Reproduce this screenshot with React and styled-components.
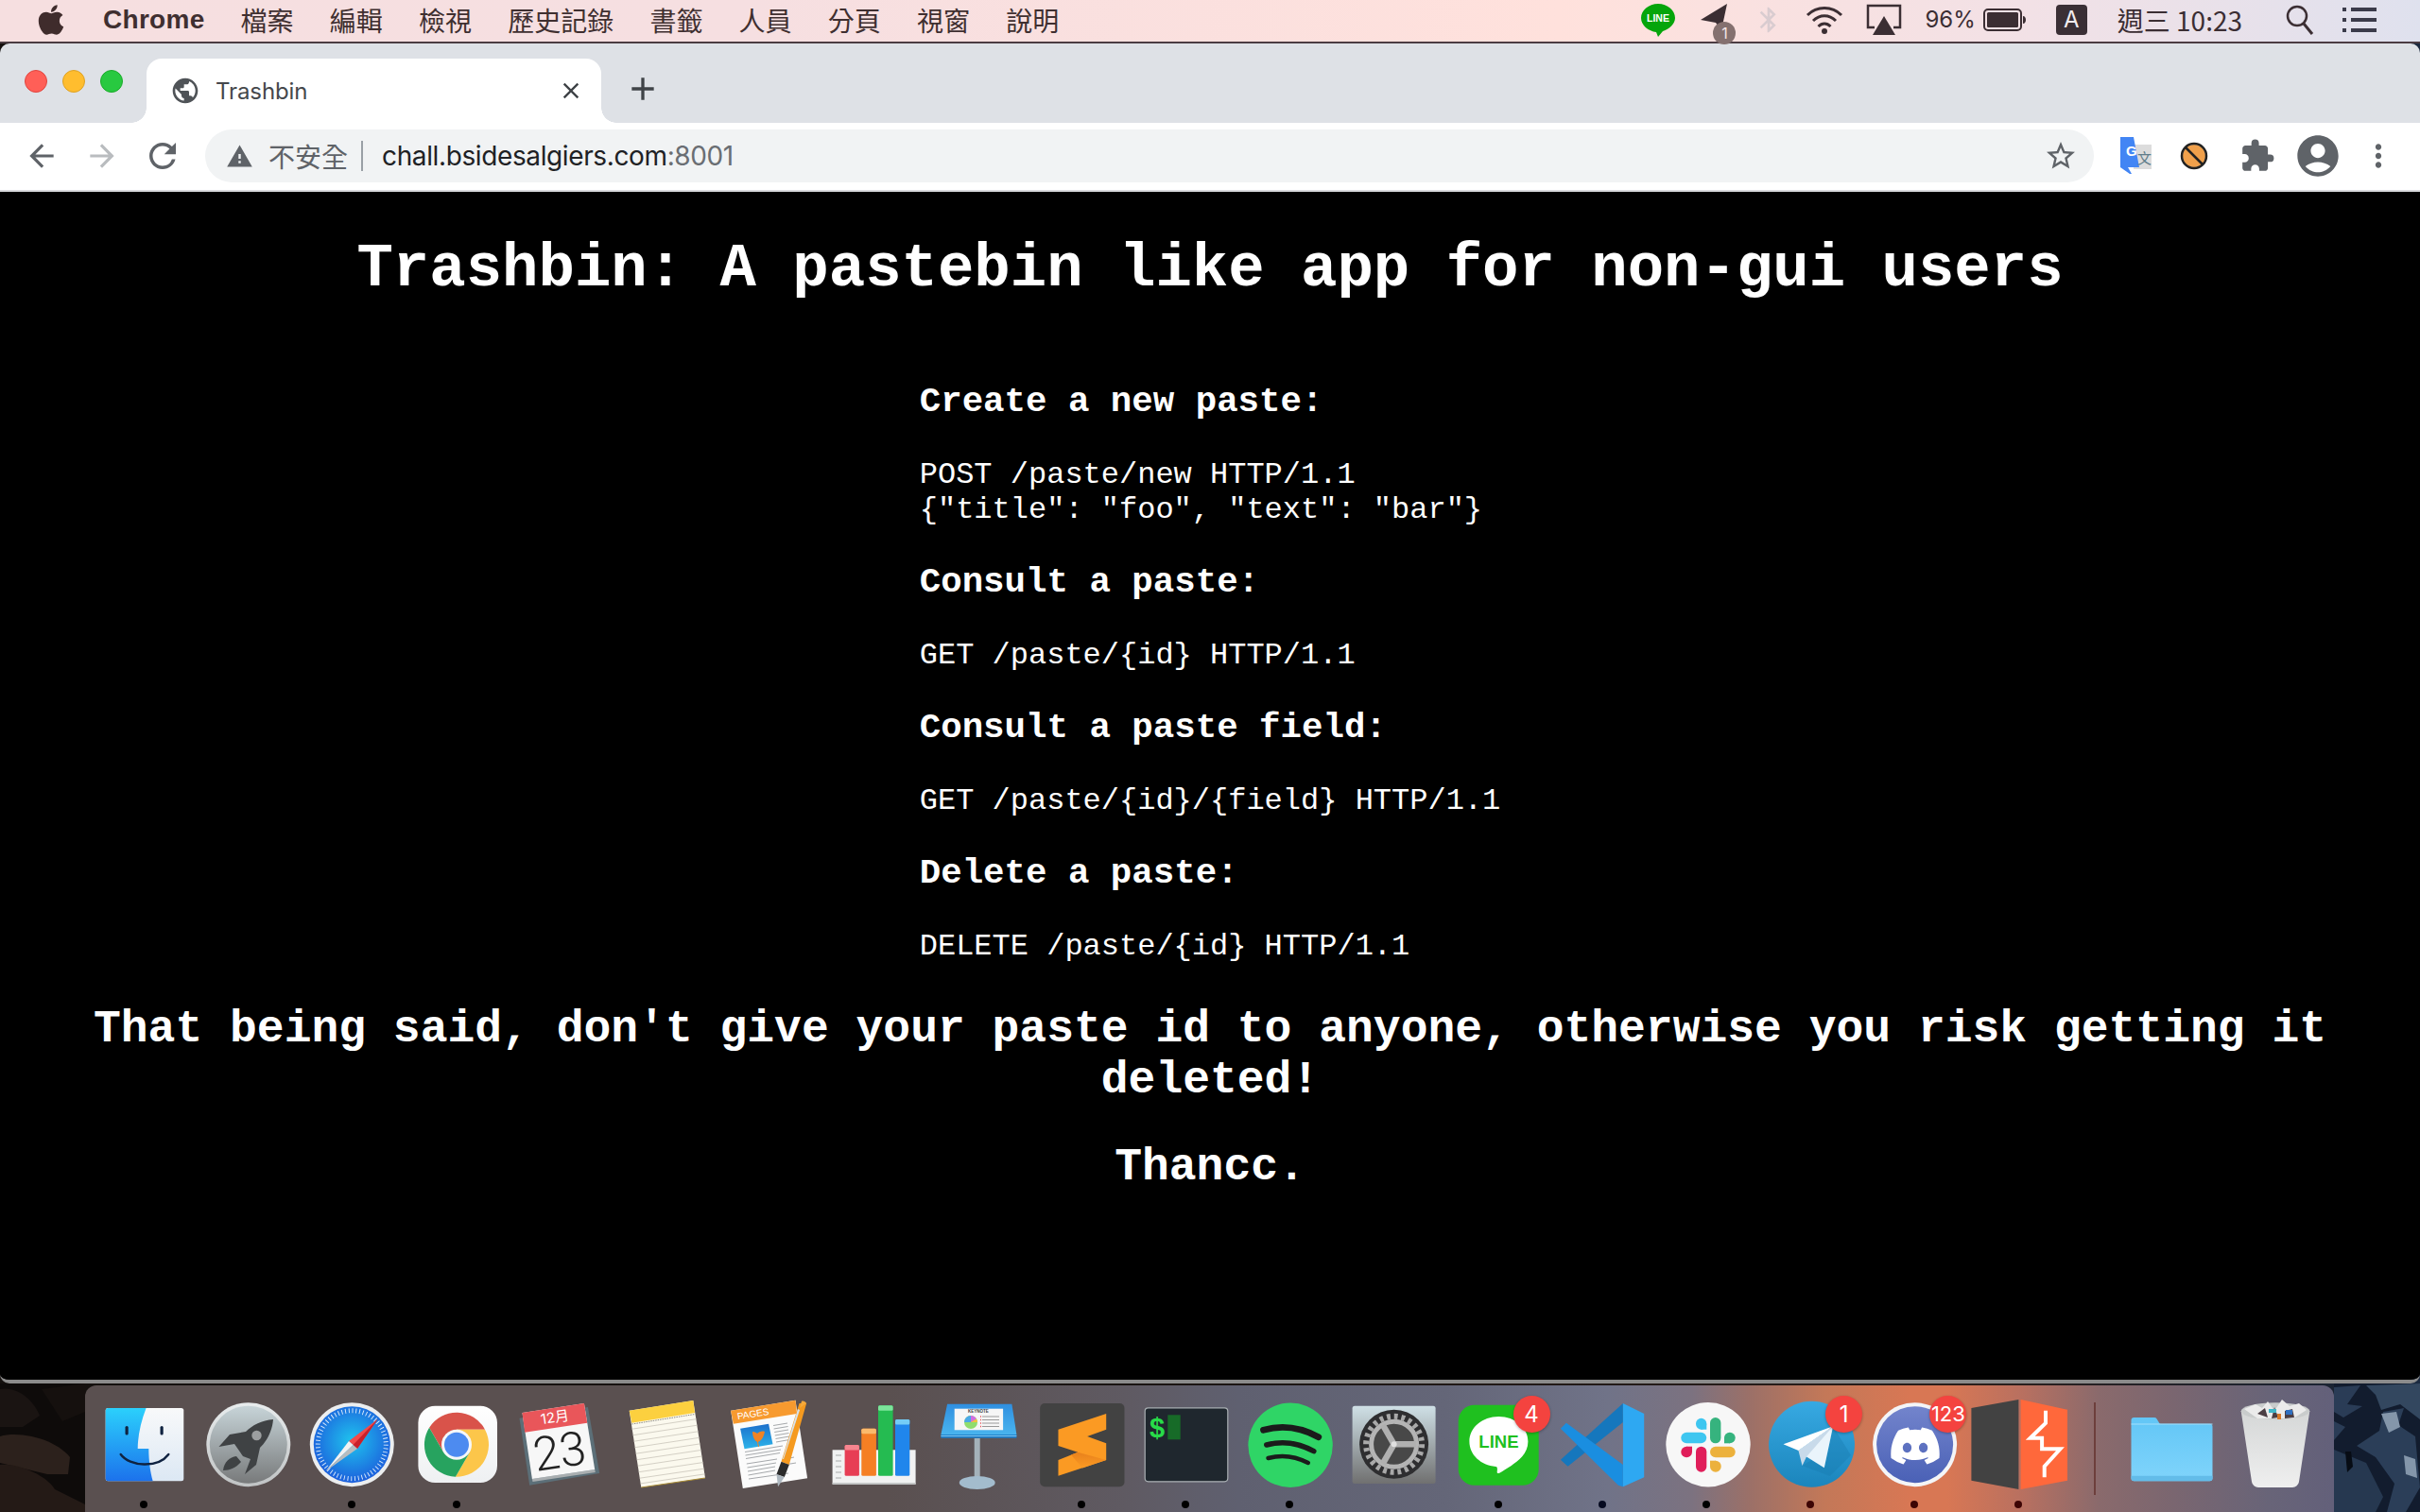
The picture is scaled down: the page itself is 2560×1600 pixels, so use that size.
import React from 'react';
import styled, { createGlobalStyle } from 'styled-components';
import { FaApple, FaDiscord } from 'react-icons/fa';
import { MdArrowBack, MdArrowForward, MdRefresh, MdPublic, MdWarning, MdStarBorder, MdExtension, MdAccountCircle, MdMoreVert, MdClose, MdAdd, MdBluetooth } from 'react-icons/md';

const Global = createGlobalStyle`
  html, body { margin: 0; padding: 0; background: #1b1714; }
  * { box-sizing: border-box; }
`;
const SANS = `Inter, "Noto Sans CJK TC", "Liberation Sans", sans-serif`;
const Screen = styled.div`
  width: 2560px; height: 1600px; display: flex; flex-direction: column; overflow: hidden;
  font-family: ${SANS};
  background: linear-gradient(90deg, #14100e 0, #1a1412 1200px, #2a1f1c 2100px, #1b2433 2469px, #1b2a40 100%);
`;
const MenuBar = styled.div`
  height: 46px; flex: none; display: flex; align-items: center; padding: 0 46px 2px 36px;
  border-bottom: 2px solid #4b3c42;
  background: linear-gradient(90deg, #f6dfe0 0, #f6dfe1 800px, #ffe1dc 1650px, #f2e1e6 2150px, #dfe1ee 100%);
  color: #3f2f30; font-size: 28px;
`;
const MenuApple = styled.span`display: flex; font-size: 36px; margin-right: 37px; color: #3f2c2c;`;
const MenuBrand = styled.span`font-weight: 700; font-size: 28px; letter-spacing: .3px; margin-right: 38px; font-family: "Liberation Sans", sans-serif;`;
const MenuItem = styled.span`margin-right: 38.200px; line-height: 1; font-family: "Noto Sans CJK TC", sans-serif; font-weight: 400;`;
const MenuSpacer = styled.div`flex: 1;`;
const Tray = styled.span`display: flex; align-items: center; margin-left: ${p => p.$ml || 0}px; position: relative; line-height: 1; font-size: 24px; color: #3b2e33;`;
const TrayClock = styled(Tray)`font-family: "Noto Sans CJK TC", sans-serif; font-size: 28px;`;
const BadgeOne = styled.span`
  position: absolute; right: -3px; bottom: -9px; width: 24px; height: 24px; border-radius: 50%;
  background: #84706f; color: #f4e6e6; font-size: 16px; text-align: center; line-height: 24px;
`;
const KeyA = styled.span`width: 33px; height: 32px; border-radius: 4px; background: #3a2f35; color: #f2ecee; font-size: 24px; text-align: center; line-height: 32px;`;

const Win = styled.div`
  height: 1418px; flex: none; display: flex; flex-direction: column; overflow: hidden;
  border-radius: 10px; border-bottom: 4px solid #8b8b8b;
`;
const TabStrip = styled.div`height: 84px; flex: none; background: #dee1e6; display: flex; align-items: flex-end;`;
const Lights = styled.div`width: 155px; height: 84px; display: flex; align-items: center; gap: 16px; padding: 0 0 4px 26px;`;
const Light = styled.span`width: 24px; height: 24px; border-radius: 50%; background: ${p => p.$c}; border: 1px solid ${p => p.$b};`;
const Tab = styled.div`
  width: 481px; height: 68px; background: #fff; border-radius: 16px 16px 0 0; position: relative;
  display: flex; align-items: center; padding: 0 18px 0 25px; color: #45484c; font-size: 24px;
  &::before, &::after { content: ""; position: absolute; bottom: 0; width: 16px; height: 16px; }
  &::before { left: -16px; background: radial-gradient(circle at 0 0, #dee1e6 15.500px, #fff 16px); }
  &::after { right: -16px; background: radial-gradient(circle at 100% 0, #dee1e6 15.500px, #fff 16px); }
`;
const TabTitle = styled.span`flex: 1; margin-left: 16px; font-family: Inter, sans-serif; letter-spacing: -0.1px;`;
const TabClose = styled.span`display: flex; font-size: 28px; color: #3f4347;`;
const NewTab = styled.span`display: flex; margin: 0 0 16px 24px; font-size: 40px; color: #3f4347; height: 40px;`;

const Toolbar = styled.div`height: 73px; flex: none; background: #fff; display: flex; align-items: center; padding: 0 12px 1px; border-bottom: 2px solid #d9dadd;`;
const ToolBtn = styled.span`width: 64px; height: 56px; flex: none; display: flex; align-items: center; justify-content: center; color: ${p => p.$c || '#5f6368'}; font-size: ${p => p.$s || 38}px;`;
const Omni = styled.div`
  flex: 1; height: 56px; margin: 0 13px; border-radius: 28px; background: #f1f3f4; display: flex; align-items: center;
  padding: 0 3px 0 22px; font-size: 28px;
`;
const Warn = styled.span`display: flex; font-size: 29px; color: #5f6368; margin-right: 16px;`;
const NotSecure = styled.span`color: #5f6368; font-family: "Noto Sans CJK TC", sans-serif; font-size: 28px;`;
const Divider = styled.span`width: 2px; height: 32px; background: #9aa0a6; margin: 0 20px 0 14px;`;
const Host = styled.span`color: #202124; font-family: Inter, sans-serif; font-size: 28px; letter-spacing: -0.380px;`;
const Port = styled.span`color: #6a6e73; font-family: Inter, sans-serif; font-size: 28px; letter-spacing: -0.380px; flex: 1;`;
const ExtArt = styled.svg`margin-right: 6px;`;

const Page = styled.main`
  flex: 1; min-height: 0; background: #000; color: #fff; text-align: center;
  font-family: "Liberation Mono", "Courier New", monospace; font-size: 32px; overflow: hidden;
`;
const Title = styled.h1`font-size: 64px; margin: 46px 0 45px; font-weight: 700; line-height: normal;`;
const Docs = styled.div`width: fit-content; margin: 0 auto; padding-top: 1px; text-align: left;`;
const DocHead = styled.h3`font-size: 37.440px; margin: 37.440px 0; font-weight: 700; line-height: normal;`;
const Code = styled.pre`font: inherit; line-height: normal; margin: 36.500px 0 37.440px; white-space: pre;`;
const Warning = styled.h2`font-size: 48px; line-height: normal; font-weight: 700; margin: 42px 0 0; padding: 0 4px;`;
const Thanks = styled.h2`font-size: 48px; line-height: normal; font-weight: 700; margin: 38px 0 0;`;

const Bottom = styled.div`flex: 1; min-height: 0; display: flex;`;
const Wall = styled.svg`width: ${p => p.$w}px; height: 136px; flex: none; display: block;`;
const Dock = styled.div`
  flex: 1; height: 134px; margin-top: 2px; padding: 18px 7px 0; display: flex; border-radius: 12px 12px 0 0;
  background: linear-gradient(90deg, #5a5050 0, #5a5050 850px, #5f5a62 1100px, #5f6070 1220px, #646678 1440px, #707388 1610px, #7c7280 1700px, #9b7068 1760px, #c37858 1840px, #d87754 1930px, #d87754 1970px, #b87060 2050px, #8a6a6c 2130px, #7a6670 2210px, #686478 2310px, #63607a 100%);
`;
const Slot = styled.div`width: 110.200px; flex: none; display: flex; flex-direction: column; align-items: center; position: relative;`;
const IconBox = styled.svg`width: 90px; height: 90px; display: block; flex: none; overflow: visible;`;
const Dot = styled.span`width: 8px; height: 8px; margin-top: 14px; border-radius: 50%; background: ${p => p.$on ? p.$c || '#000' : 'transparent'};`;
const Badge = styled.span`
  position: absolute; top: -7px; right: 0; width: 39px; height: 39px; border-radius: 50%; background: #f4433f; color: #fff;
  font-size: ${p => p.$s || 24}px; font-family: Inter, "Liberation Sans", sans-serif; text-align: center; line-height: 39px; box-shadow: 0 1px 3px rgba(0,0,0,.3);
`;
const DockSep = styled.div`width: 51px; flex: none; display: flex; justify-content: center;`;
const SepLine = styled.span`width: 2px; height: 98px; background: #6d3f3c;`;
const IconText = styled.text`font-family: ${p => p.$f || '"Liberation Sans"'}, "Noto Sans CJK TC", sans-serif; font-weight: ${p => p.$w || 400};`;

const Ico = ({ children, id }) => <IconBox viewBox="0 0 90 90" aria-label={id}>{children}</IconBox>;

const Finder = () => <Ico id="finder">
  <defs><linearGradient id="fb" x1="0" y1="0" x2="0" y2="1"><stop offset="0" stopColor="#2bd0fc"/><stop offset="1" stopColor="#1c72ec"/></linearGradient>
  <linearGradient id="fw" x1="0" y1="0" x2="0" y2="1"><stop offset="0" stopColor="#f8f9fa"/><stop offset="1" stopColor="#dce8f4"/></linearGradient></defs>
  <rect x="4.700" y="6" width="82.600" height="77.300" rx="2.500" fill="url(#fw)"/>
  <path d="M7 6H47.600C42 20 38.700 36 38.700 49H50.300C50.300 62 52 74 54.700 83.300H7a2.500 2.500 0 0 1-2.300-2.500V8.500A2.500 2.500 0 0 1 7 6z" fill="url(#fb)"/>
  <rect x="25.500" y="25" width="3.200" height="9.500" rx="1.600" fill="#0f2240"/><rect x="62.500" y="25" width="3.200" height="9.500" rx="1.600" fill="#0f2240"/>
  <path d="M20.700 55C30 68 60 70 71.300 55" fill="none" stroke="#0f2240" strokeWidth="2.400" strokeLinecap="round"/>
</Ico>;
const Launchpad = () => <Ico id="launchpad">
  <defs><linearGradient id="lp" x1="0" y1="0" x2="0" y2="1"><stop offset="0" stopColor="#c7d4d8"/><stop offset="1" stopColor="#787a7b"/></linearGradient>
  <linearGradient id="lr" x1="0" y1="0" x2="0" y2="1"><stop offset="0" stopColor="#e8eced"/><stop offset="1" stopColor="#c0c3c4"/></linearGradient></defs>
  <circle cx="45.800" cy="44.700" r="44.500" fill="url(#lr)"/><circle cx="45.800" cy="44.700" r="41" fill="url(#lp)"/>
  <path d="M72 18C60 19 50 24 43 31L26 34 14.500 47 31 44 40 57 48 60 42 76 54 66 58 48C66 40 71 30 72 18z" fill="#3f4244"/>
  <path d="M19 72C20 63 26 58 33 57L38 63C33 69 26 72 19 72z" fill="#3f4244"/>
  <circle cx="54.500" cy="35" r="5.200" fill="#9c9fa0"/>
</Ico>;
const Safari = () => <Ico id="safari">
  <defs><radialGradient id="sf" cx=".5" cy=".45" r=".55"><stop offset="0" stopColor="#1fc4ee"/><stop offset="1" stopColor="#1c5fdc"/></radialGradient></defs>
  <circle cx="45.300" cy="44.700" r="44.500" fill="#eceeef"/><circle cx="45.300" cy="44.700" r="40.500" fill="url(#sf)"/>
  <circle cx="45.300" cy="44.700" r="36" fill="none" stroke="#e3effc" strokeWidth="5" strokeDasharray="0.900 2.870"/>
  <path d="M72.600 17.700 42 41 51 49z" fill="#f24a4a"/><path d="M72.600 17.700 46.500 45 51 49z" fill="#c9202a"/>
  <path d="M17.600 72.700 42 41 46.500 45z" fill="#f2f2f2"/><path d="M17.600 72.700 46.500 45 51 49z" fill="#b8bcbe"/>
</Ico>;
const Chrome = () => <Ico id="chrome">
  <defs><linearGradient id="cw" x1="0" y1="0" x2="0" y2="1"><stop offset="0" stopColor="#fff"/><stop offset="1" stopColor="#eef0f2"/></linearGradient></defs>
  <rect x="4.400" y="3.700" width="83.600" height="81.300" rx="18" fill="url(#cw)"/>
  <path d="M75 28.700A34 34 0 0 0 16.100 26.700L31.100 52.700 45 28.700Z" fill="#d9534a"/>
  <path d="M43.900 78.700A34 34 0 0 0 75 28.700L45 28.700 58.900 52.700Z" fill="#fcc64a"/>
  <path d="M16.100 26.700A34 34 0 0 0 43.900 78.700L58.900 52.700 31.100 52.700Z" fill="#27a35f"/>
  <circle cx="45" cy="44.700" r="16" fill="#f6f7f8"/><circle cx="45" cy="44.700" r="13" fill="#4d8bf0"/>
</Ico>;
const CalendarIcon = () => <Ico id="calendar">
  <path d="M1.500 16.700 73.900 5 86.200 75 12.200 87.700z" fill="#5c6f78"/>
  <path d="M14.900 81 81.200 71 81.800 74 15.500 84z" fill="#a9aeb0"/>
  <path d="M4.500 11 69.900 1 81.200 71 14.900 81z" fill="#f7f7f7"/>
  <path d="M4.500 11 69.900 1 73.200 21.700 7.200 31.700z" fill="#e9565a"/>
  <IconText $f="Inter" x="38.900" y="21" fontSize="15" textAnchor="middle" fill="#fff" transform="rotate(-8.500 38.900 16)">12月</IconText>
  <IconText $f="Roboto" $w={300} x="43.900" y="69" fontSize="50" textAnchor="middle" fill="#222" transform="rotate(-8.500 43.900 51)">23</IconText>
</Ico>;
const noteLines = [.24, .32, .4, .48, .56, .64, .72, .8, .88, .95].map(t =>
  `M${(7.7 + 12.6 * t).toFixed(1)} ${(8.7 + 81.3 * t).toFixed(1)}L${(75.3 + 12.7 * t).toFixed(1)} ${(-2 + 82 * t).toFixed(1)}`).join('');
const NotesIcon = () => <Ico id="notes">
  <path d="M7.700 8.700 75.300 -2 88 80 20.300 90z" fill="#fbf9ee"/>
  <path d="M7.700 8.700 75.300 -2 77 11 10.300 21.700z" fill="#fcd03f"/>
  <path d={noteLines} stroke="#d4d0c5" strokeWidth="1"/>
  <path d="M10.500 23 77.200 12.500" stroke="#8c8a80" strokeWidth="1" strokeDasharray="1.500 1"/>
  <path d="M20.300 90 88 80" stroke="#a78a34" strokeWidth="1.200"/>
</Ico>;
const PagesIcon = () => <Ico id="pages">
  <defs><linearGradient id="pg" x1="0" y1="0" x2="0" y2="1"><stop offset="0" stopColor="#1d6fcb"/><stop offset="1" stopColor="#2cb4ea"/></linearGradient></defs>
  <path d="M5.100 8.700 73.500 -2.300 86.100 80.300 17.800 91z" fill="#fbfbfb"/>
  <path d="M5.100 8.700 73.500 -2.300 75.100 12 7.800 22.700z" fill="#f79a2f"/>
  <IconText x="12.500" y="18.300" fontSize="10" fill="#fff" transform="rotate(-9 12.500 18.300)">PAGES</IconText>
  <path d="M15.100 27.700 45.100 22.700 49.500 44.300 19.500 49.300z" fill="url(#pg)"/>
  <path d="M28 31c3 0 4 1 5 2 2-2 5-3 8-2-1 5-3 9-7 11l1 5h-1l-1-5c-3-2-5-6-5-11z" fill="#f08324"/>
  <path d="M50 24.500 65 22M50.600 28 65.600 25.500M51.200 31.500 66 29M51.800 35 66.500 32.500M52.500 38.500 67 36M53 42 67 39.500M20 52.500 60 46M20.500 56 58 50M21 59.500 57 53.500M21.800 65 54 60M22.500 69 53 64M23 73 52 68M23.500 77 52 72M24 81 66 75M64 52 70 51M63 60 72 58M62 66 74 64" stroke="#8f9397" strokeWidth=".8"/>
  <path d="M77.500 1 85.100 1 66.800 66 58.500 62.700z" fill="#f59a1f"/>
  <path d="M80 -1.300C82 -2 84 -1 85.100 1L78 6z" fill="#f6a93a"/>
  <path d="M76 7 78 8 61 60 60 60z" fill="#d7e2ec"/>
  <path d="M58.500 62.700 66.800 66 61.800 79 53.500 76z" fill="#2b2b2b"/>
  <path d="M53.500 76 61.800 79 55 89.300z" fill="#aeb8c0"/>
</Ico>;
const NumbersIcon = () => <Ico id="numbers">
  <rect x="2.600" y="50.300" width="88" height="36.400" fill="#f1f2f2"/><rect x="2.600" y="85" width="88" height="1.700" fill="#c4c6c6"/>
  <path d="M6 56h6M6 62h6M6 68h6M6 74h6M6 80h6" stroke="#a8aaaa" strokeWidth="1.200"/>
  <rect x="15.600" y="45" width="15.300" height="32.700" rx="1.500" fill="#e73e55"/><rect x="15.600" y="45" width="15.300" height="5.500" rx="1.500" fill="#f6858f"/>
  <rect x="33.300" y="27.700" width="15.600" height="50" rx="1.500" fill="#f57f24"/><rect x="33.300" y="27.700" width="15.600" height="5.500" rx="1.500" fill="#fbba6c"/>
  <rect x="51" y="3.300" width="15.600" height="74.400" rx="1.500" fill="#25bb51"/><rect x="51" y="3.300" width="15.600" height="5.500" rx="1.500" fill="#7ce59b"/>
  <rect x="69" y="18" width="15.300" height="59.700" rx="1.500" fill="#2086ec"/><rect x="69" y="18" width="15.300" height="5.500" rx="1.500" fill="#74ccf6"/>
</Ico>;
const KeynoteIcon = () => <Ico id="keynote">
  <defs><linearGradient id="kn" x1="0" y1="0" x2="0" y2="1"><stop offset="0" stopColor="#2f8fe0"/><stop offset="1" stopColor="#49b4ee"/></linearGradient></defs>
  <rect x="41.700" y="38" width="6" height="46" fill="#a4b2ba"/><ellipse cx="44.700" cy="85" rx="19" ry="7" fill="#a3bccd"/>
  <path d="M13.100 1.700H81.400L86.400 34H6.400z" fill="url(#kn)"/><path d="M6.400 34H86.400V37.700H6.400z" fill="#1f7fc9"/>
  <rect x="6.400" y="35" width="80" height="1" fill="#7cc7f2"/>
  <rect x="20.700" y="6.700" width="51.400" height="22.600" fill="#f6f6f6"/>
  <IconText $w={700} x="46" y="11" fontSize="4.500" textAnchor="middle" fill="#444">KEYNOTE</IconText>
  <circle cx="38" cy="21" r="7" fill="#8fdd6e"/><path d="M38 21V14a7 7 0 0 1 6 3.500z" fill="#d26de0"/><path d="M38 21 44 17.500A7 7 0 0 1 45 21z" fill="#f2c23f"/><path d="M38 21H31a7 7 0 0 1 7-7z" fill="#4aa9e8"/>
  <path d="M50 15h18M50 18.500h18M50 22h18M50 25.500h18" stroke="#999" strokeWidth="1.200"/>
  <path d="M48 15h1M48 18.500h1M48 22h1M48 25.500h1" stroke="#e8505a" strokeWidth="1.500"/>
</Ico>;
const SublimeIcon = () => <Ico id="sublime">
  <defs><linearGradient id="sb" x1="0" y1="0" x2="0" y2="1"><stop offset="0" stopColor="#e8811c"/><stop offset="1" stopColor="#fb9a23"/></linearGradient></defs>
  <rect x="1.200" y="1" width="89.300" height="88.300" rx="5" fill="#424242"/>
  <path d="M71.200 12V28.700L51.200 36 71.200 43.300V61L20.500 77.700V61L41.200 52.700 20.500 46V28.700z" fill="#fb9a23"/>
  <path d="M41.200 52.700 71.200 61 46 69.500 34 55.500z" fill="url(#sb)"/>
</Ico>;
const TerminalIcon = () => <Ico id="terminal">
  <rect x="2.200" y="5.800" width="87.600" height="78" rx="3.500" fill="#1f272e" stroke="#aab0b4" strokeWidth="1.200"/>
  <IconText $w={700} x="7" y="36.500" fontSize="29" fill="#28dc49">$</IconText>
  <rect x="26.300" y="13.300" width="13.400" height="26" fill="#176b28"/>
</Ico>;
const SpotifyIcon = () => <Ico id="spotify">
  <circle cx="46.100" cy="45.300" r="44.700" fill="#2fd566"/>
  <path d="M17.500 29.300Q47 21 75.800 36.700" fill="none" stroke="#1b1b1b" strokeWidth="6.800" strokeLinecap="round"/>
  <path d="M20.800 45Q46 38 70.800 51.700" fill="none" stroke="#1b1b1b" strokeWidth="5.500" strokeLinecap="round"/>
  <path d="M22.500 59Q44 53 64.800 64" fill="none" stroke="#1b1b1b" strokeWidth="4.500" strokeLinecap="round"/>
</Ico>;
const PrefsIcon = () => <Ico id="prefs">
  <defs><linearGradient id="pf" x1="0" y1="0" x2="0" y2="1"><stop offset="0" stopColor="#cfe0e6"/><stop offset="1" stopColor="#707070"/></linearGradient></defs>
  <rect x="1.600" y="3.700" width="88" height="82.300" rx="2.500" fill="url(#pf)"/>
  <circle cx="45.600" cy="44.300" r="36.500" fill="#2e2e30"/>
  <circle cx="45.600" cy="44.300" r="29.500" fill="none" stroke="#a9a9a9" strokeWidth="6" strokeDasharray="3.860 3.860"/>
  <circle cx="45.600" cy="44.300" r="24" fill="#484848" stroke="#b4b4b4" strokeWidth="5"/>
  <path d="M45.600 44.300H69M45.600 44.300 33.900 24M45.600 44.300 33.900 64.600" stroke="#b0b0b0" strokeWidth="6.500"/>
  <circle cx="45.600" cy="44.300" r="3" fill="#e0e0e0"/>
</Ico>;
const LineIcon = () => <Ico id="line">
  <rect x="2.700" y="2.700" width="85" height="85" rx="17" fill="#1fc01f"/>
  <path d="M45.400 15C28 15 14.400 26.500 14.400 41.500c0 14 12 25 28 26.500 2 .3 1.500 3 1.300 5.500-.2 1.600 1 2 2.500 1.200C53 71 64 64 70 57.500c4-4.500 6.400-10 6.400-16C76.400 26.500 62.800 15 45.400 15z" fill="#fff"/>
  <IconText $w={700} x="45.400" y="48" fontSize="18.500" textAnchor="middle" fill="#1fc01f">LINE</IconText>
</Ico>;
const VSCodeIcon = () => <Ico id="vscode">
  <path d="M66.900 1V21L8.500 67.700 0.900 60.700z" fill="#1577bd" strokeLinejoin="round"/>
  <path d="M0.900 27.700 6.900 21.700 66.900 66V89.300L61.900 87.700z" fill="#1a8ee0" strokeLinejoin="round"/>
  <path d="M66.900 1 89.200 12V79.300L66.900 89.300z" fill="#2ea8f2"/>
</Ico>;
const SlackDrop = ({ x, y, w, h, c, cx, cy }) => <>
  <rect x={x} y={y} width={w} height={h} rx="5.800" fill={c}/>
  <rect x={cx} y={cy} width="6" height="6" fill={c}/>
</>;
const SlackIcon = () => <Ico id="slack">
  <circle cx="47" cy="44.700" r="44.700" fill="#f7f7f7"/>
  <rect x="18.300" y="31.700" width="26.900" height="11.600" rx="5.800" fill="#3ec6f0"/>
  <SlackDrop x={34} y={16.700} w={11.300} h={12} c="#3ec6f0" cx={39.300} cy={22.700}/>
  <rect x="49" y="16" width="11.400" height="27.300" rx="5.700" fill="#36b37e"/>
  <SlackDrop x={64} y={31.700} w={11.700} h={11.600} c="#36b37e" cx={64} cy={37.300}/>
  <rect x="49" y="46.700" width="26.700" height="11.600" rx="5.800" fill="#ecb13c"/>
  <SlackDrop x={49} y={61.700} w={11.700} h={12} c="#ecb13c" cx={49} cy={61.700}/>
  <rect x="34" y="46.700" width="11.300" height="27" rx="5.650" fill="#e01e5a"/>
  <SlackDrop x={18.300} y={46.700} w={11.700} h={11.600} c="#e01e5a" cx={24} cy={46.700}/>
</Ico>;
const TelegramIcon = () => <Ico id="telegram">
  <defs><linearGradient id="tg" x1="0" y1="0" x2="0" y2="1"><stop offset="0" stopColor="#37a9e2"/><stop offset="1" stopColor="#1b85bc"/></linearGradient></defs>
  <circle cx="46.500" cy="44.300" r="45.500" fill="url(#tg)"/>
  <path d="M69.100 25.300 59.800 69.300 46.500 61 36.500 67 66 78 88 56z" fill="#1878ad" opacity=".35"/>
  <path d="M16.500 44.300 69.100 25.300 32.500 51z" fill="#fff"/>
  <path d="M32.500 51 69.100 25.300 59.800 69.300 41 57.500z" fill="#eaf4fb"/>
  <path d="M32.500 51 69.100 25.300 41 57.500 36.500 67z" fill="#c8daea"/>
</Ico>;
const DiscordIcon = () => <Ico id="discord">
  <defs><linearGradient id="dc" x1="0" y1="0" x2="0" y2="1"><stop offset="0" stopColor="#7384cc"/><stop offset="1" stopColor="#4a61b6"/></linearGradient></defs>
  <circle cx="45.600" cy="44.700" r="44.500" fill="#f4f5f7"/><circle cx="45.600" cy="44.700" r="40.500" fill="url(#dc)"/>
  <FaDiscord x="18" y="18" size={56} color="#fff"/>
</Ico>;
const BurpIcon = () => <Ico id="burp">
  <path d="M-4.600 6 45.400 -3V92L-4.600 82.700z" fill="#424242"/>
  <path d="M47.700 -3 97 7.700V82.700L47.700 92z" fill="#ff683b"/>
  <path d="M74 8.700V22L57.700 37.700H70.100V49.300H89.400L72.700 67.700V79.300" fill="none" stroke="#fff" strokeWidth="4"/>
</Ico>;
const FolderIcon = () => <Ico id="folder">
  <defs><linearGradient id="fo" x1="0" y1="0" x2="0" y2="1"><stop offset="0" stopColor="#62c6f6"/><stop offset="1" stopColor="#80d4fb"/></linearGradient></defs>
  <path d="M2.500 19a3 3 0 0 1 3-3H27a3 3 0 0 1 2.900 2L32 21.500a2 2 0 0 0 1.800 1.200H85.500a3 3 0 0 1 3 3V80.300a3 3 0 0 1-3 3H5.500a3 3 0 0 1-3-3z" fill="url(#fo)"/>
  <path d="M2.500 23h86" stroke="#a3e0fc" strokeWidth="1"/>
  <path d="M2.500 77.700h86V80.300a3 3 0 0 1-3 3H5.500a3 3 0 0 1-3-3z" fill="#63bce9"/>
</Ico>;
const TrashIcon = () => <Ico id="trash">
  <defs><linearGradient id="tr" x1="0" y1="0" x2="0" y2="1"><stop offset="0" stopColor="#d5d7d7"/><stop offset="1" stopColor="#efefef"/></linearGradient></defs>
  <path d="M8.700 9.300H81.300L70 84a7 7 0 0 1-7 6H27a7 7 0 0 1-7-6z" fill="url(#tr)"/>
  <ellipse cx="45" cy="9.300" rx="36.300" ry="9" fill="#c9cccc"/>
  <path d="M12 7 24 2 31 6 37 -1 44 9 52 -3 60 4 70 1 78 8 64 17H26z" fill="#ebebeb"/>
  <path d="M26 12l8-6 3 10zM44 5l4 11-7 1zM55 9l8-2 2 9-10 1z" fill="#4b3e44"/>
  <path d="M38 7h8v4h-8z" fill="#3fb6c8"/><path d="M56 8h7v5h-7z" fill="#2f6fc0"/><path d="M47 12h4v6h-4z" fill="#d97a2a"/>
</Ico>;

const dockApps = [
  [Finder, 1], [Launchpad, 0], [Safari, 1], [Chrome, 1], [CalendarIcon, 0], [NotesIcon, 0], [PagesIcon, 0], [NumbersIcon, 0], [KeynoteIcon, 0],
  [SublimeIcon, 1], [TerminalIcon, 1], [SpotifyIcon, 1], [PrefsIcon, 0], [LineIcon, 1, '4', 24], [VSCodeIcon, 1], [SlackIcon, 1],
  [TelegramIcon, 1, '1', 24], [DiscordIcon, 1, '123', 22], [BurpIcon, 1],
];

export default function App() {
  return <>
    <Global/>
    <Screen>
      <MenuBar>
        <MenuApple><FaApple/></MenuApple>
        <MenuBrand>Chrome</MenuBrand>
        {['檔案','編輯','檢視','歷史記錄','書籤','人員','分頁','視窗','說明'].map(t => <MenuItem key={t}>{t}</MenuItem>)}
        <MenuSpacer/>
        <Tray>
          <svg width="38" height="38" viewBox="0 0 38 38"><path d="M19 2C9 2 1 9 1 17c0 8 8 14 16 15l2 5 5-6c7-2 13-8 13-14 0-8-8-15-18-15z" fill="#05a50b"/><text x="19" y="21" fontSize="10.500" fontWeight="700" fill="#fff" textAnchor="middle" fontFamily="Liberation Sans">LINE</text></svg>
        </Tray>
        <Tray $ml={24}>
          <svg width="36" height="34" viewBox="0 0 36 34"><path d="M2 17 30 0 24 28 18 20z" fill="#3b2e33"/></svg>
          <BadgeOne>1</BadgeOne>
        </Tray>
        <Tray $ml={22}><MdBluetooth size={32} color="#d9ccd0"/></Tray>
        <Tray $ml={23}>
          <svg width="40" height="32" viewBox="0 0 40 32"><path d="M2 11C12 1 28 1 38 11M8 17c7-7 17-7 24 0M13.500 23c4-4 9-4 13 0" fill="none" stroke="#3b2e33" strokeWidth="3"/><circle cx="20" cy="28" r="3" fill="#3b2e33"/></svg>
        </Tray>
        <Tray $ml={24}>
          <svg width="38" height="34" viewBox="0 0 38 34"><path d="M9 25H2V2h34v23h-7" fill="none" stroke="#3b2e33" strokeWidth="2.500"/><path d="M19 13 31 33H7z" fill="#3b2e33"/></svg>
        </Tray>
        <Tray $ml={24}>96%</Tray>
        <Tray $ml={8}>
          <svg width="46" height="24" viewBox="0 0 46 24"><rect x="1" y="1" width="39" height="22" rx="4" fill="none" stroke="#3b2e33" strokeWidth="2"/><rect x="4" y="4" width="33" height="16" rx="1.500" fill="#3b2e33"/><path d="M42 8c2 0 3 2 3 4s-1 4-3 4z" fill="#3b2e33"/></svg>
        </Tray>
        <Tray $ml={31}><KeyA>A</KeyA></Tray>
        <TrayClock $ml={32}>週三 10:23</TrayClock>
        <Tray $ml={46}>
          <svg width="30" height="32" viewBox="0 0 30 32"><circle cx="12" cy="12" r="10" fill="none" stroke="#3b2e33" strokeWidth="2.500"/><path d="M19 20l9 11" stroke="#3b2e33" strokeWidth="3"/></svg>
        </Tray>
        <Tray $ml={30}>
          <svg width="36" height="26" viewBox="0 0 36 26"><path d="M0 2h4M9 2h27M0 13h4M9 13h27M0 24h4M9 24h27" stroke="#3b3b4a" strokeWidth="4"/></svg>
        </Tray>
      </MenuBar>
      <Win>
        <TabStrip>
          <Lights>
            <Light $c="#ff5f57" $b="#e0443e"/><Light $c="#ffbd2e" $b="#dea123"/><Light $c="#28c940" $b="#1aab29"/>
          </Lights>
          <Tab>
            <MdPublic size={32} color="#4f5357"/>
            <TabTitle>Trashbin</TabTitle>
            <TabClose><MdClose/></TabClose>
          </Tab>
          <NewTab><MdAdd/></NewTab>
        </TabStrip>
        <Toolbar>
          <ToolBtn><MdArrowBack/></ToolBtn>
          <ToolBtn $c="#b9bcbf"><MdArrowForward/></ToolBtn>
          <ToolBtn $s={42}><MdRefresh/></ToolBtn>
          <Omni>
            <Warn><MdWarning/></Warn>
            <NotSecure>不安全</NotSecure>
            <Divider/>
            <Host>chall.bsidesalgiers.com</Host><Port>:8001</Port>
            <ToolBtn $s={36} $c="#5f6368"><MdStarBorder/></ToolBtn>
          </Omni>
          <ToolBtn>
            <svg width="34" height="40" viewBox="0 0 34 40"><path d="M14 8h19v26H14z" fill="#dcdcdc"/><path d="M0 0h14l6 32H8l4 7H10L0 32z" fill="#4285f4"/><text x="6" y="20" fontSize="15" fontWeight="700" fill="#fff" fontFamily="Liberation Sans">G</text><text x="18" y="28" fontSize="15" fill="#5f7d8a" fontFamily="Noto Sans CJK TC">文</text></svg>
          </ToolBtn>
          <ToolBtn>
            <ExtArt width="30" height="30" viewBox="0 0 30 30"><circle cx="15" cy="15" r="12" fill="#f0a04b"/><circle cx="15" cy="15" r="13" fill="none" stroke="#222" strokeWidth="2.500"/><path d="M6 6l18 18" stroke="#222" strokeWidth="2.500"/></ExtArt>
          </ToolBtn>
          <ToolBtn $s={38}><MdExtension/></ToolBtn>
          <ToolBtn $s={52}><MdAccountCircle/></ToolBtn>
          <ToolBtn $s={38}><MdMoreVert/></ToolBtn>
        </Toolbar>
        <Page>
          <Title>Trashbin: A pastebin like app for non-gui users</Title>
          <Docs>
            <DocHead>Create a new paste:</DocHead>
            <Code>{'POST /paste/new HTTP/1.1\n{"title": "foo", "text": "bar"}'}</Code>
            <DocHead>Consult a paste:</DocHead>
            <Code>{'GET /paste/{id} HTTP/1.1'}</Code>
            <DocHead>Consult a paste field:</DocHead>
            <Code>{'GET /paste/{id}/{field} HTTP/1.1'}</Code>
            <DocHead>Delete a paste:</DocHead>
            <Code>{'DELETE /paste/{id} HTTP/1.1'}</Code>
          </Docs>
          <Warning>That being said, don't give your paste id to anyone, otherwise you risk getting it deleted!</Warning>
          <Thanks>Thancc.</Thanks>
        </Page>
      </Win>
      <Bottom>
        <Wall $w={90} viewBox="0 0 90 136" preserveAspectRatio="none">
          <rect width="90" height="136" fill="#0e0b0a"/>
          <path d="M0 6C18 2 36 18 42 34L24 46 0 46Z" fill="#1a1412"/>
          <path d="M0 56C20 50 58 58 74 78L72 96 50 96 0 84Z" fill="#2c211c"/>
          <path d="M0 86C20 84 50 98 58 112L90 128V136H0Z" fill="#241a16"/>
          <path d="M44 6 90 0V30L66 40Z" fill="#15100e"/>
        </Wall>
        <Dock>
          {dockApps.map(([Icon, on, badge, size], i) => (
            <Slot key={i}>
              <Icon/>
              {badge && <Badge $s={size}>{badge}</Badge>}
              <Dot $on={on} $c={i >= 16 ? '#3d0504' : i === 14 ? '#060a20' : '#000'}/>
            </Slot>
          ))}
          <DockSep><SepLine/></DockSep>
          <Slot><FolderIcon/></Slot>
          <Slot><TrashIcon/></Slot>
        </Dock>
        <Wall $w={91} viewBox="0 0 91 136" preserveAspectRatio="none">
          <rect width="91" height="136" fill="#121c2e"/>
          <path d="M0 4 28 2 14 22 30 24 10 36 0 30ZM0 40 12 46 0 60Z" fill="#2a3c56"/>
          <path d="M34 2 91 0V38L70 22 50 28 44 12Z" fill="#33475f"/>
          <path d="M52 30 74 26 68 44 86 56 91 110 76 136H56L64 106 44 78 24 66 48 50Z" fill="#2b3e58"/>
          <path d="M50 32 66 30 70 46 58 52ZM74 76 86 80 88 100 76 96Z" fill="#8496aa"/>
          <path d="M0 70 34 84 52 120 44 136H0Z" fill="#263850"/>
          <path d="M12 72 18 72 20 88 14 94Z" fill="#070c14"/>
        </Wall>
      </Bottom>
    </Screen>
  </>;
}
